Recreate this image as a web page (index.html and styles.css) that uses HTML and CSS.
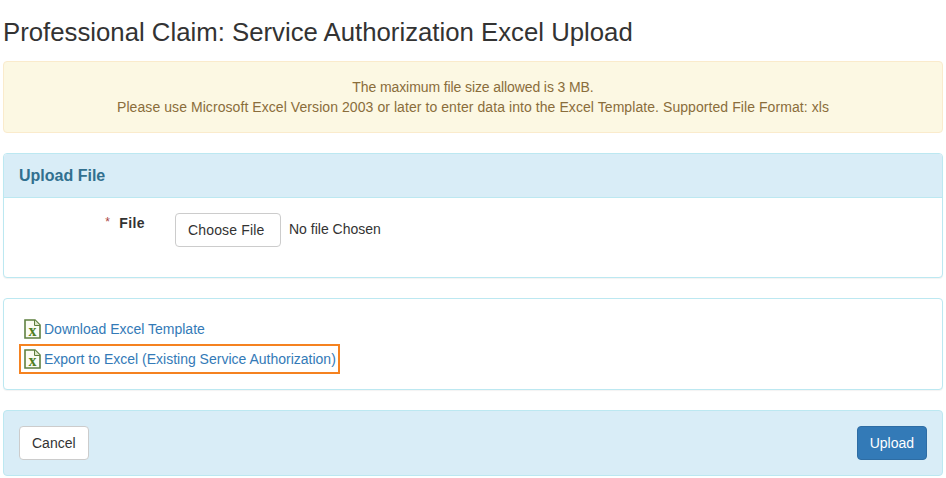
FILE: index.html
```html
<!DOCTYPE html>
<html lang="en">
<head>
    <meta charset="UTF-8">
    <title>Service Authorization Excel Upload</title>
    <link rel="stylesheet" href="styles.css">
</head>
<body>
    <h1>Professional Claim: Service Authorization Excel Upload</h1>

    <div class="alert">
        <span class="alert-size">The maximum file size allowed is 3 MB.</span><br>
        <span class="alert-format">Please use Microsoft Excel Version 2003 or later to enter data into the Excel Template. Supported File Format: xls</span>
    </div>

    <div class="panel upload-panel">
        <div class="panel-heading">Upload File</div>
        <div class="panel-body file-row">
            <label class="file-label"><span class="required">*</span>File</label>
            <button class="btn btn-file">Choose File</button>
            <span class="file-name">No file Chosen</span>
        </div>
    </div>

    <div class="panel links-panel">
        <div class="link-row">
            <svg class="xls-icon" viewBox="0 0 17 20"><path d="M1 1H11L16 6V19H1Z" fill="#fbfcf4" stroke="#5f8040" stroke-width="1.6"/><path d="M10.5 1V6.5H16" fill="#dfe8cc" stroke="#5f8040"/><text x="8.5" y="16.5" text-anchor="middle" class="xls-letter">x</text></svg>
            <a href="#">Download Excel Template</a>
        </div>
        <div class="link-row highlighted">
            <svg class="xls-icon" viewBox="0 0 17 20"><path d="M1 1H11L16 6V19H1Z" fill="#fbfcf4" stroke="#5f8040" stroke-width="1.6"/><path d="M10.5 1V6.5H16" fill="#dfe8cc" stroke="#5f8040"/><text x="8.5" y="16.5" text-anchor="middle" class="xls-letter">x</text></svg>
            <a href="#">Export to Excel (Existing Service Authorization)</a>
        </div>
    </div>

    <div class="actions">
        <button class="btn">Cancel</button>
        <button class="btn btn-primary">Upload</button>
    </div>
</body>
</html>
```

FILE: styles.css
```css
* {
    box-sizing: border-box;
}

body {
    margin: 0;
    padding: 0 3px;
    background: #fff;
    color: #333;
    font-family: "Liberation Sans", Arial, sans-serif;
    font-size: 14px;
    line-height: 20px;
}

h1 {
    margin: 0;
    padding-top: 16px;
    height: 61px;
    font-size: 25.75px;
    line-height: 32px;
    font-weight: 400;
    color: #333;
}

.alert {
    height: 72px;
    padding: 15px;
    margin-bottom: 20px;
    background: #fcf8e3;
    border: 1px solid #faebcc;
    border-radius: 4px;
    color: #8a6d3b;
    text-align: center;
}

.alert-size {
    letter-spacing: -0.1px;
}

.alert-format {
    letter-spacing: 0.07px;
}

.panel {
    background: #fff;
    border: 1px solid #bce8f1;
    border-radius: 4px;
    margin-bottom: 20px;
    box-shadow: 0 1px 1px rgba(0, 0, 0, 0.05);
}

.panel-heading {
    height: 44px;
    padding: 11px 15px;
    background: #d9edf7;
    border-bottom: 1px solid #bce8f1;
    border-radius: 3px 3px 0 0;
    color: #31708f;
    font-size: 16px;
    line-height: 22px;
    font-weight: 700;
}

.file-row {
    display: flex;
    align-items: flex-start;
    height: 79px;
    padding-top: 15px;
}

.file-label {
    width: 171px;
    margin-top: -1px;
    padding-right: 30px;
    text-align: right;
    font-weight: 700;
    letter-spacing: 0.4px;
}

.required {
    margin-right: 9px;
    font-weight: 400;
    font-size: 12px;
    color: #a94442;
    vertical-align: 2px;
}

.btn {
    height: 34px;
    padding: 6px 12px;
    background: #fff;
    border: 1px solid #ccc;
    border-radius: 4px;
    color: #333;
    font-family: inherit;
    font-size: 14px;
    line-height: 20px;
}

.btn-file {
    width: 106px;
    text-align: left;
    letter-spacing: 0.15px;
}

.btn-primary {
    background: #337ab7;
    border-color: #2e6da4;
    color: #fff;
}

.file-name {
    margin-left: 8px;
    padding-top: 6px;
}

.links-panel {
    height: 92px;
    padding: 15px;
}

.link-row {
    display: flex;
    align-items: center;
    height: 30px;
    width: 321px;
    padding-left: 5px;
}

.link-row a {
    color: #337ab7;
    text-decoration: none;
}

.highlighted {
    outline: 2px solid #f58220;
    outline-offset: -2px;
}

.xls-icon {
    width: 17px;
    height: 20px;
    margin-right: 3px;
    flex: none;
}

.xls-letter {
    font-family: "Liberation Serif", serif;
    font-size: 16px;
    font-weight: 700;
    fill: #4f7f1f;
}

.actions {
    display: flex;
    justify-content: space-between;
    align-items: center;
    height: 66px;
    padding: 0 15px;
    background: #d9edf7;
    border: 1px solid #bce8f1;
    border-radius: 4px;
}
```
